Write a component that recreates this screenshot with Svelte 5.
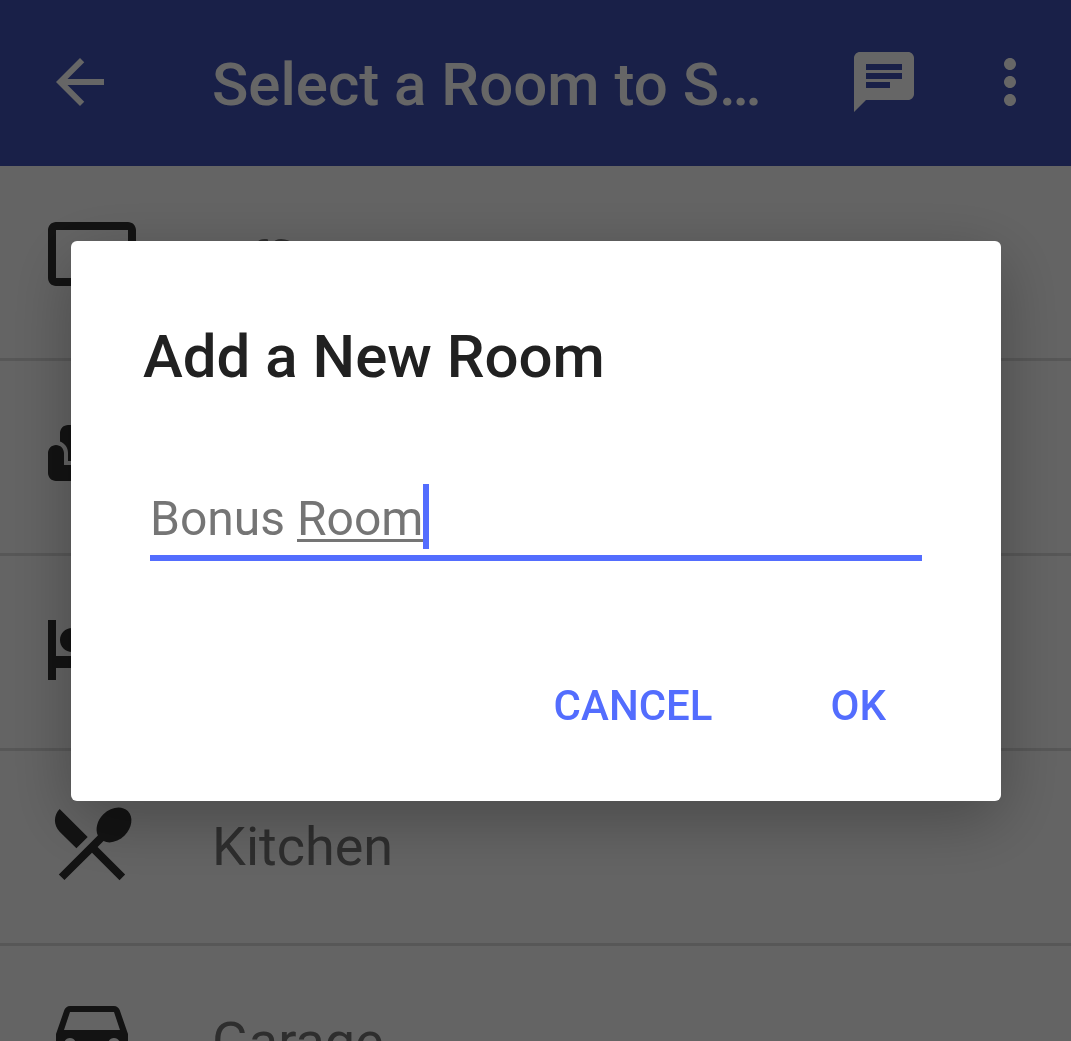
<script lang="ts">
import { onMount } from "svelte";

interface Room {
  name: string;
  icon: string;
}

const rooms: Room[] = [
  {
    name: "Office",
    icon: "M21 3H3c-1.1 0-2 .9-2 2v12c0 1.1.9 2 2 2h5v2h8v-2h5c1.1 0 2-.9 2-2V5c0-1.1-.9-2-2-2zm0 14H3V5h18v12z",
  },
  {
    name: "Living Room",
    icon: "M21 10c-1.1 0-2 .9-2 2v3H5v-3c0-1.1-.9-2-2-2s-2 .9-2 2v5c0 1.1.9 2 2 2h18c1.1 0 2-.9 2-2v-5c0-1.1-.9-2-2-2zm-3-5H6c-1.1 0-2 .9-2 2v2.15c1.16.41 2 1.51 2 2.82V14h12v-2.03c0-1.3.84-2.4 2-2.82V7c0-1.1-.9-2-2-2z",
  },
  {
    name: "Bedroom",
    icon: "M7 13c1.66 0 3-1.34 3-3S8.66 7 7 7s-3 1.34-3 3 1.34 3 3 3zm12-6h-8v7H3V5H1v15h2v-3h18v3h2v-9c0-2.21-1.79-4-4-4z",
  },
  {
    name: "Kitchen",
    icon: "M8.1 13.34l2.83-2.83L3.91 3.5c-1.56 1.56-1.56 4.09 0 5.66l4.19 4.18zm6.78-1.81c1.53.71 3.68.21 5.27-1.38 1.91-1.91 2.28-4.65.81-6.12-1.46-1.46-4.2-1.1-6.12.81-1.59 1.59-2.09 3.74-1.38 5.27L3.7 19.87l1.41 1.41L12 14.41l6.88 6.88 1.41-1.41L13.41 13l1.47-1.47z",
  },
  {
    name: "Garage",
    icon: "M18.92 5.01C18.72 4.42 18.16 4 17.5 4h-11c-.66 0-1.21.42-1.42 1.01L3 11v8c0 .55.45 1 1 1h1c.55 0 1-.45 1-1v-1h12v1c0 .55.45 1 1 1h1c.55 0 1-.45 1-1v-8l-2.08-5.99zM6.5 15c-.83 0-1.5-.67-1.5-1.5S5.67 12 6.5 12s1.5.67 1.5 1.5S7.33 15 6.5 15zm11 0c-.83 0-1.5-.67-1.5-1.5s.67-1.5 1.5-1.5 1.5.67 1.5 1.5-.67 1.5-1.5 1.5zM5 10l1.5-4.5h11L19 10H5z",
  },
];

let dialogOpen = $state(true);
let roomName = $state("Bonus Room");

/// Caret and underline of the word being typed

let inputElement: HTMLInputElement | undefined = $state(undefined);
let wordStart = $state(0);
let textEnd = $state(0);

/** Measure where the last word starts and ends inside the input. */
function measure(): void {
  const context = document.createElement("canvas").getContext("2d");
  if (context == null || inputElement == undefined) {
    return;
  }
  const style = getComputedStyle(inputElement);
  context.font = `${style.fontSize} ${style.fontFamily}`;
  const lead = roomName.slice(0, roomName.lastIndexOf(" ") + 1);
  wordStart = Math.round(context.measureText(lead).width);
  textEnd = Math.floor(context.measureText(roomName).width);
}

function closeDialog(): void {
  dialogOpen = false;
}

onMount(() => {
  measure();
  inputElement?.focus();
});
</script>

<div class="screen">
  <header class="app-bar">
    <button class="icon-button" aria-label="Back">
      <svg viewBox="0 0 24 24"><path d="M20 11H7.83l5.59-5.59L12 4l-8 8 8 8 1.41-1.41L7.83 13H20v-2z" /></svg>
    </button>
    <h1 class="app-title">Select a Room to S…</h1>
    <button class="icon-button" aria-label="Messages">
      <svg viewBox="0 0 24 24"><path d="M20 2H4c-1.1 0-2 .9-2 2v18l4-4h14c1.1 0 2-.9 2-2V4c0-1.1-.9-2-2-2zM6 9h12v2H6V9zm8 5H6v-2h8v2zm4-6H6V6h12v2z" /></svg>
    </button>
    <button class="icon-button" aria-label="More options">
      <svg viewBox="0 0 24 24"><path d="M12 8c1.1 0 2-.9 2-2s-.9-2-2-2-2 .9-2 2 .9 2 2 2zm0 2c-1.1 0-2 .9-2 2s.9 2 2 2 2-.9 2-2-.9-2-2-2zm0 6c-1.1 0-2 .9-2 2s.9 2 2 2 2-.9 2-2-.9-2-2-2z" /></svg>
    </button>
  </header>

  <ul class="room-list">
    {#each rooms as room}
      <li>
        <button class="room">
          <svg class="room-icon" viewBox="0 0 24 24"><path d={room.icon} /></svg>
          <span>{room.name}</span>
        </button>
      </li>
    {/each}
  </ul>

  {#if dialogOpen}
    <div class="scrim">
      <div class="dialog" role="dialog" aria-modal="true" aria-labelledby="dialog-title">
        <h2 class="dialog-title" id="dialog-title">Add a New Room</h2>
        <div class="field">
          <input
            class="field-input"
            type="text"
            aria-labelledby="dialog-title"
            autocomplete="off"
            spellcheck="false"
            bind:this={inputElement}
            bind:value={roomName}
            oninput={measure}
          />
          <span class="caret" style="left: {textEnd}px"></span>
          <span class="composing" style="left: {wordStart}px; width: {textEnd - wordStart}px"></span>
        </div>
        <div class="actions">
          <button class="action" onclick={closeDialog}>CANCEL</button>
          <button class="action" onclick={closeDialog}>OK</button>
        </div>
      </div>
    </div>
  {/if}
</div>

<style>
:global(body) {
  margin: 0;
}

.screen {
  height: 100vh;
  overflow: hidden;
  background-color: #fafafa;
  font-family: Roboto, sans-serif;
}

button {
  margin: 0;
  padding: 0;
  border: none;
  background: none;
  font-family: inherit;
  cursor: pointer;
}

svg {
  display: block;
  fill: currentColor;
}

/* App bar */

.app-bar {
  display: flex;
  align-items: center;
  box-sizing: border-box;
  height: 166px;
  padding: 0 25px 0 44px;
  background-color: #3f51b5;
  color: #ffffff;
}

.icon-button {
  flex: none;
  width: 72px;
  margin-bottom: 2px;
  margin-left: 54px;
  color: inherit;
}

.icon-button:first-child {
  margin-left: 0;
}

.app-title {
  flex: 1;
  overflow: hidden;
  margin: 0;
  padding: 4px 0 0 96px;
  font-size: 60px;
  font-weight: 500;
  line-height: 80px;
  white-space: nowrap;
}

/* Room list */

.room-list {
  margin: 0;
  padding: 0;
  list-style: none;
}

.room {
  display: flex;
  align-items: center;
  gap: 72px;
  box-sizing: border-box;
  width: 100%;
  height: 195px;
  padding: 0 44px 2px;
  border-bottom: 3px solid #dadada;
  color: #737373;
  font-size: 54px;
  text-align: left;
}

.room-icon {
  flex: none;
  width: 96px;
  margin-bottom: 6px;
  color: #303030;
}

/* Dialog */

.scrim {
  position: fixed;
  inset: 0;
  display: flex;
  align-items: center;
  padding: 1px 70px 0 71px;
  background-color: rgba(0, 0, 0, 0.6);
}

.dialog {
  flex: 1;
  box-sizing: border-box;
  padding: 76px 72px 42px;
  border-radius: 6px;
  background-color: #ffffff;
  box-shadow: 0 18px 66px rgba(0, 0, 0, 0.28);
}

.dialog-title {
  margin: 0;
  color: #212121;
  font-size: 60px;
  font-weight: 500;
  line-height: 80px;
}

.field {
  position: relative;
  margin: 87px 7px 90px;
}

.field-input {
  display: block;
  box-sizing: border-box;
  width: 100%;
  height: 77px;
  padding: 0 0 2px;
  border: none;
  border-bottom: 6px solid #536dfe;
  border-radius: 0;
  outline: none;
  background: none;
  color: #757575;
  caret-color: transparent;
  font-family: inherit;
  font-size: 48px;
}

.caret {
  position: absolute;
  top: 0;
  width: 6px;
  height: 65px;
  background-color: #536dfe;
}

.composing {
  position: absolute;
  top: 55px;
  height: 3px;
  background-color: #757575;
}

.actions {
  display: flex;
  justify-content: flex-end;
  gap: 46px;
  padding-right: 7px;
}

.action {
  height: 108px;
  padding: 0 36px;
  color: #536dfe;
  font-size: 42px;
  font-weight: 500;
}
</style>
